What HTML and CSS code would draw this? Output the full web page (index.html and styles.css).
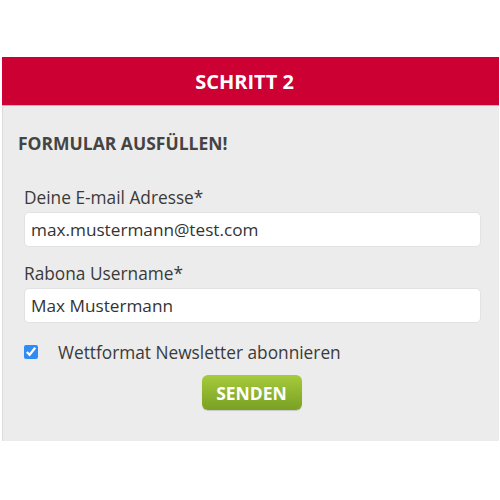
FILE: index.html
```html
<!DOCTYPE html>
<html lang="de">
<head>
    <meta charset="UTF-8">
    <meta name="viewport" content="width=device-width, initial-scale=1.0">
    <title>Schritt 2</title>
    <link rel="stylesheet" href="styles.css">
</head>
<body>

    <div class="step-box">
        <!-- Header -->
        <div class="step-header">SCHRITT 2</div>

        <!-- Form -->
        <div class="step-body">
            <h3 class="form-title">FORMULAR AUSFÜLLEN!</h3>

            <div class="field">
                <label for="emailInput">Deine E-mail Adresse*</label>
                <input type="text" id="emailInput" value="max.mustermann@test.com">
            </div>

            <div class="field">
                <label for="userInput">Rabona Username*</label>
                <input type="text" id="userInput" value="Max Mustermann">
            </div>

            <div class="check-row">
                <input type="checkbox" id="newsletterCheck" checked>
                <label for="newsletterCheck">Wettformat Newsletter abonnieren</label>
            </div>

            <div class="button-row">
                <button id="sendBtn">SENDEN</button>
            </div>
        </div>
    </div>

</body>
</html>
```

FILE: styles.css
```css
/* General Styles */
body {
    font-family: "Open Sans", Arial, sans-serif;
    background-color: #fff;
    margin: 0;
    padding: 0;
    color: #3a3a3a;
}

.step-box {
    margin: 57px 1px 0 2px;
}

.step-header {
    background-color: #cc0033;
    color: white;
    font-weight: bold;
    font-size: 20px;
    text-align: center;
    height: 48px;
    line-height: 50px;
    padding-right: 12px;
    border-bottom: 1px solid #eba3b3;
}

.step-body {
    background-color: #ececec;
    border-left: 1px solid #dcdcdc;
    padding: 26px 18px 31px 15px;
    display: flex;
    flex-direction: column;
}

.form-title {
    margin: 0;
    font-size: 17.5px;
    line-height: 22px;
    font-weight: bold;
    color: #444;
}

.field {
    display: flex;
    flex-direction: column;
    gap: 3px;
    margin: 33px 0 0 6px;
}

.field + .field {
    margin-top: 16px;
}

.field label {
    font-size: 17.3px;
    line-height: 22px;
    color: #3a3a3a;
}

.field input {
    height: 35px;
    box-sizing: border-box;
    border: 1px solid #e2e2e2;
    border-radius: 5px;
    background: white;
    padding: 0 6px;
    font-family: "Open Sans", Arial, sans-serif;
    font-size: 17.2px;
    color: #333;
}

.check-row {
    display: flex;
    align-items: center;
    height: 22px;
    margin: 18px 0 0 6px;
    font-size: 17.3px;
    color: #3a3a3a;
}

.check-row input {
    width: 14px;
    height: 14px;
    margin: 0 20px 0 0;
    accent-color: #2f8cf5;
}

.button-row {
    display: flex;
    justify-content: center;
    margin-top: 12px;
    padding-left: 4px;
}

button {
    width: 100px;
    height: 35px;
    border: none;
    border-radius: 6px;
    background: linear-gradient(#a6cb3b, #7aa024);
    color: white;
    font-family: "Open Sans", Arial, sans-serif;
    font-weight: bold;
    font-size: 17.5px;
    cursor: pointer;
    box-shadow: 0 1px 1px rgba(0, 0, 0, 0.15);
}
```
